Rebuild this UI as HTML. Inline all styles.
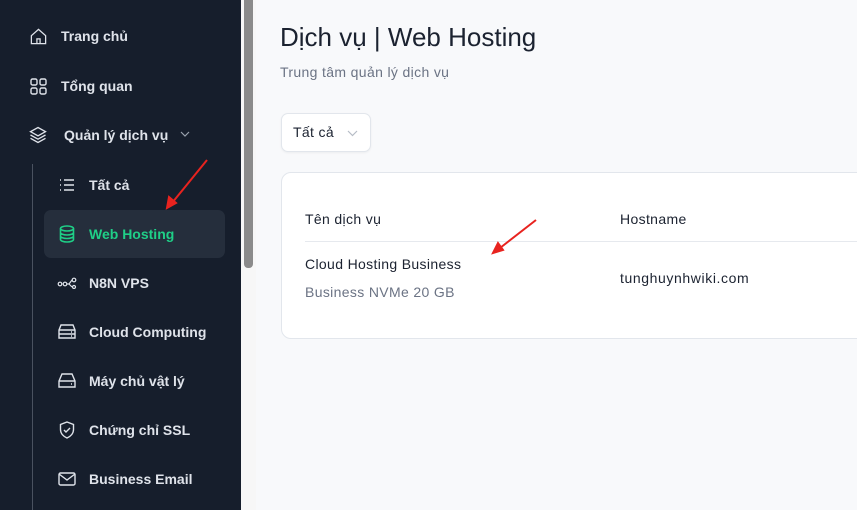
<!DOCTYPE html>
<html><head><meta charset="utf-8"><style>
*{margin:0;padding:0;box-sizing:border-box}
body{width:857px;height:510px;overflow:hidden;background:#f8f9fb;font-family:"Liberation Sans",sans-serif;position:relative}
.sb{position:absolute;left:0;top:0;width:241px;height:510px;background:#161e2c}
.scr{position:absolute;left:241px;top:0;width:15px;height:510px;background:#f7f7f7}
.thumb{position:absolute;left:244px;top:0;width:9px;height:268px;background:#8b8b8b;border-radius:0 0 4px 4px}
.it{position:absolute;color:#dfe3ea;font-size:14px;font-weight:bold;display:flex;align-items:center}
.vline{position:absolute;left:32px;top:164px;width:1px;height:346px;background:#4a5260}
.act{position:absolute;left:44px;top:210px;width:181px;height:48px;background:#252e3c;border-radius:7px}
.t{position:absolute;color:#1b2230;letter-spacing:.35px;white-space:nowrap}
</style></head><body>
<div class="sb"></div>
<div class="vline"></div>
<div class="act"></div>
<div class="it" style="left:61px;top:28px">Trang chủ</div>
<svg style="position:absolute;left:29px;top:27px" width="19" height="19" viewBox="0 0 24 24" fill="none" stroke="#dfe3ea" stroke-width="1.6"><path d="M3 11l9-8 9 8v10H3z M10 21v-6h4v6"/></svg>
<div class="it" style="left:61px;top:78px">Tổng quan</div>
<svg style="position:absolute;left:30px;top:78px" width="17" height="17" viewBox="0 0 17 17" fill="none" stroke="#dfe3ea" stroke-width="1.4"><rect x="1" y="1" width="6" height="6" rx="1.5"/><rect x="10" y="1" width="6" height="6" rx="1.5"/><rect x="1" y="10" width="6" height="6" rx="1.5"/><rect x="10" y="10" width="6" height="6" rx="1.5"/></svg>
<div class="it" style="left:64px;top:127px">Quản lý dịch vụ</div>
<svg style="position:absolute;left:180px;top:131px" width="10" height="7" viewBox="0 0 10 7" fill="none" stroke="#9aa2ae" stroke-width="1.2"><path d="M1 1l4 4 4-4"/></svg>
<svg style="position:absolute;left:28px;top:125px" width="20" height="20" viewBox="0 0 24 24" fill="none" stroke="#dfe3ea" stroke-width="1.6"><path d="M12 3l9 5-9 5-9-5z M3 12l9 5 9-5 M3 16l9 5 9-5"/></svg>
<svg style="position:absolute;left:59px;top:178px" width="16" height="14" viewBox="0 0 16 14" fill="none" stroke="#dfe3ea" stroke-width="1.4"><path d="M5 2h10M5 7h10M5 12h10M1 2h1M1 7h1M1 12h1"/></svg>
<div class="it" style="left:89px;top:177px">Tất cả</div>
<svg style="position:absolute;left:59px;top:225px" width="16" height="18" viewBox="0 0 16 18" fill="none" stroke="#1fcf87" stroke-width="1.6"><ellipse cx="8" cy="3.5" rx="6.5" ry="2.5"/><path d="M1.5 3.5v11c0 1.4 2.9 2.5 6.5 2.5s6.5-1.1 6.5-2.5v-11M1.5 7.5c0 1.4 2.9 2.5 6.5 2.5s6.5-1.1 6.5-2.5M1.5 11c0 1.4 2.9 2.5 6.5 2.5s6.5-1.1 6.5-2.5"/></svg>
<div class="it" style="left:89px;top:226px;color:#1fcf87">Web Hosting</div>
<svg style="position:absolute;left:57px;top:277px" width="20" height="12" viewBox="0 0 20 12" fill="none" stroke="#dfe3ea" stroke-width="1.2"><circle cx="3" cy="7" r="1.8"/><circle cx="8" cy="7" r="1.8"/><path d="M10 7h2l3-4M12 7l3 3"/><circle cx="17" cy="3" r="1.8"/><circle cx="17" cy="10" r="1.5"/></svg>
<div class="it" style="left:89px;top:275px">N8N VPS</div>
<svg style="position:absolute;left:58px;top:324px" width="18" height="16" viewBox="0 0 18 16" fill="none" stroke="#dfe3ea" stroke-width="1.4"><path d="M3 1h12l2 5v8H1V6z M1 6h16 M1 10h16"/><path d="M13 8h1M13 12h1"/></svg>
<div class="it" style="left:89px;top:324px">Cloud Computing</div>
<svg style="position:absolute;left:58px;top:373px" width="18" height="15" viewBox="0 0 18 15" fill="none" stroke="#dfe3ea" stroke-width="1.4"><path d="M4 1h10l3 7v6H1V8z M1 8h16 M13 11h1"/></svg>
<div class="it" style="left:89px;top:373px">Máy chủ vật lý</div>
<svg style="position:absolute;left:59px;top:421px" width="16" height="18" viewBox="0 0 16 18" fill="none" stroke="#dfe3ea" stroke-width="1.4"><path d="M8 1l6.5 2.5v5c0 4-3 7-6.5 8.5C4.5 15.5 1.5 12.5 1.5 8.5v-5z M5 9l2 2 4-4"/></svg>
<div class="it" style="left:89px;top:422px">Chứng chỉ SSL</div>
<svg style="position:absolute;left:58px;top:472px" width="18" height="14" viewBox="0 0 18 14" fill="none" stroke="#dfe3ea" stroke-width="1.4"><rect x="1" y="1" width="16" height="12" rx="1.5"/><path d="M1 2l8 6 8-6"/></svg>
<div class="it" style="left:89px;top:471px">Business Email</div>
<div class="scr"></div><div class="thumb"></div>

<div class="t" style="left:280px;top:22px;font-size:26px;letter-spacing:0">Dịch vụ | Web Hosting</div>
<div class="t" style="left:280px;top:64px;font-size:14px;color:#6b7384">Trung tâm quản lý dịch vụ</div>
<div style="position:absolute;left:281px;top:113px;width:90px;height:39px;background:#fff;border:1px solid #e2e6ec;border-radius:7px;box-shadow:0 1px 2px rgba(0,0,0,.05)"></div>
<div class="t" style="left:293px;top:124px;font-size:14px">Tất cả</div>
<svg style="position:absolute;left:347px;top:130px" width="11" height="7" viewBox="0 0 11 7" fill="none" stroke="#b6bcc6" stroke-width="1.2"><path d="M1 1l4.5 4.5L10 1"/></svg>
<div style="position:absolute;left:281px;top:172px;width:600px;height:167px;background:#fff;border:1px solid #e2e6ec;border-radius:10px"></div>
<div class="t" style="left:305px;top:211px;font-size:14px">Tên dịch vụ</div>
<div class="t" style="left:620px;top:211px;font-size:14px">Hostname</div>
<div style="position:absolute;left:305px;top:241px;width:560px;height:1px;background:#e6e9ee"></div>
<div class="t" style="left:305px;top:256px;font-size:14px;font-weight:500">Cloud Hosting Business</div>
<div class="t" style="left:305px;top:284px;font-size:14px;color:#6b7384">Business NVMe 20 GB</div>
<div class="t" style="left:620px;top:270px;font-size:14px;letter-spacing:.6px">tunghuynhwiki.com</div>

<svg style="position:absolute;left:0;top:0" width="857" height="510" fill="none" stroke="#e8231f" stroke-width="2"><path d="M207 160L172 203"/><path d="M167 208l2-11 7 6z" fill="#e8231f"/><path d="M536 220L500 248"/><path d="M493 253l5-10 5 7z" fill="#e8231f"/></svg>
</body></html>
